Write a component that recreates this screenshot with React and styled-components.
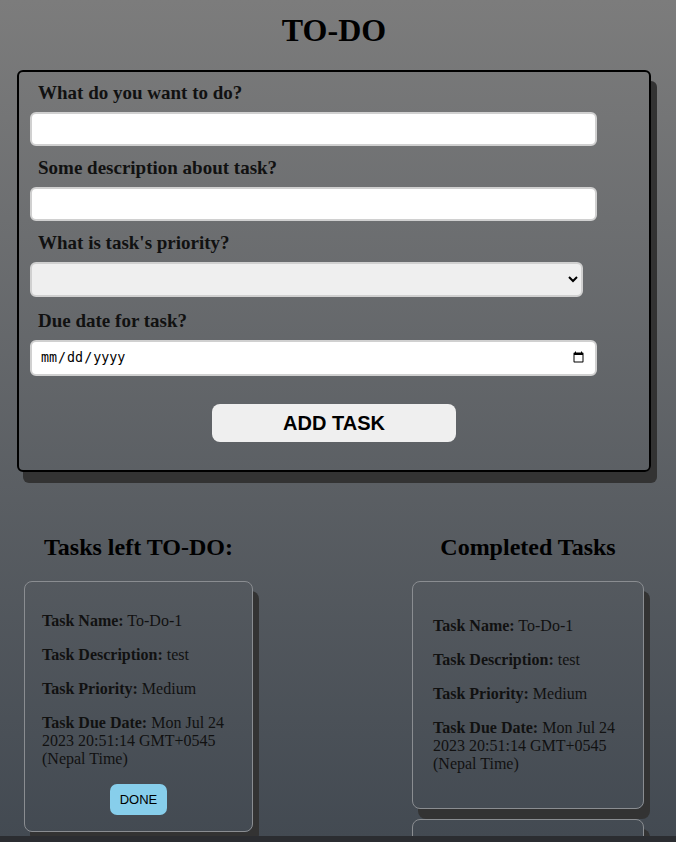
import styled, { createGlobalStyle } from "styled-components";

const GlobalStyle = createGlobalStyle`
  html, body {
    margin: 0;
    padding: 0;
  }
  body {
    font-family: "Liberation Serif", "Times New Roman", serif;
  }
`;

const tasks = [
  {
    name: "To-Do-1",
    description: "test",
    priority: "Medium",
    due: "Mon Jul 24 2023 20:51:14 GMT+0545 (Nepal Time)",
  },
];

const Page = styled.div`
  height: 100vh;
  display: flex;
  flex-direction: column;
`;

const Main = styled.main`
  flex: 1;
  overflow: hidden;
  background: linear-gradient(to bottom, #7c7c7c, #434a52);
  padding: 0 25px 0 17px;
`;

const Footer = styled.div`
  height: 6px;
  background: #2b2d31;
`;

const Title = styled.h1`
  margin: 12px 0 21px;
  text-align: center;
  font-size: 32px;
  color: #000;
`;

const FormBox = styled.form`
  border: 2px solid #000;
  border-radius: 6px;
  box-shadow: 6px 11px 0 #333;
  padding: 10px 11px 28px;
  display: flex;
  flex-direction: column;
  align-items: flex-start;
`;

const Label = styled.label`
  font-weight: bold;
  font-size: 19px;
  line-height: 22px;
  color: #111;
  margin: 0 0 8px 8px;
`;

const TextInput = styled.input`
  box-sizing: border-box;
  width: ${(p) => p.$w}px;
  height: ${(p) => p.$h}px;
  min-height: ${(p) => p.$h}px;
  margin-bottom: 11px;
  border: 2px solid #d0d0d0;
  border-radius: 6px;
  background: #fff;
  padding: 0 8px;
`;

const Select = styled.select`
  box-sizing: border-box;
  width: 553px;
  height: 35px;
  margin-bottom: 13px;
  border: 2px solid #d0d0d0;
  border-radius: 6px;
  background: #efefef;
`;

const AddButton = styled.button`
  align-self: center;
  margin-top: 17px;
  width: 244px;
  height: 38px;
  border: none;
  border-radius: 8px;
  background: #efefef;
  font-family: "Liberation Sans", Arial, sans-serif;
  font-weight: bold;
  font-size: 20px;
  color: #000;
`;

const Lists = styled.section`
  display: flex;
  justify-content: space-between;
  align-items: flex-start;
  padding: 62px 7px 0 7px;
`;

const Column = styled.div`
  width: ${(p) => p.$w}px;
  display: flex;
  flex-direction: column;
  gap: 10px;
`;

const ColumnTitle = styled.h2`
  margin: 0 0 10px;
  font-size: 24px;
  text-align: center;
  color: #000;
`;

const Card = styled.div`
  border: 1px solid #8a8d91;
  border-radius: 8px;
  box-shadow: 6px 10px 0 #333;
  padding: ${(p) => (p.$done ? "6px 20px 19px" : "1px 17px 16px")};
  min-height: ${(p) => (p.$stub ? "40px" : "0")};
  font-size: 16px;
  color: #111;

  p {
    margin: 16px 0;
    line-height: 18px;
  }
`;

const DoneButton = styled.button`
  display: block;
  margin: 0 auto;
  border: none;
  border-radius: 7px;
  background: #87ceeb;
  padding: 8px 10px;
  font-family: "Liberation Sans", Arial, sans-serif;
  font-size: 13px;
  color: #000;
`;

const CardBody = styled.div`
  padding-top: 13px;
`;

function TaskCard({ task, done }) {
  return (
    <Card $done={done}>
      <CardBody>
        <p>
          <b>Task Name:</b> {task.name}
        </p>
        <p>
          <b>Task Description:</b> {task.description}
        </p>
        <p>
          <b>Task Priority:</b> {task.priority}
        </p>
        <p>
          <b>Task Due Date:</b> {task.due}
        </p>
      </CardBody>
      {!done && <DoneButton type="button">DONE</DoneButton>}
    </Card>
  );
}

export default function App() {
  return (
    <Page>
      <GlobalStyle />
      <Main>
        <Title>TO-DO</Title>
        <FormBox onSubmit={(e) => e.preventDefault()}>
          <Label>What do you want to do?</Label>
          <TextInput type="text" $w={567} $h={34} />
          <Label>Some description about task?</Label>
          <TextInput type="text" $w={567} $h={34} />
          <Label>What is task's priority?</Label>
          <Select defaultValue="">
            <option value=""></option>
            <option value="low">Low</option>
            <option value="medium">Medium</option>
            <option value="high">High</option>
          </Select>
          <Label>Due date for task?</Label>
          <TextInput type="date" $w={567} $h={36} />
          <AddButton type="submit">ADD TASK</AddButton>
        </FormBox>
        <Lists>
          <Column $w={229}>
            <ColumnTitle>Tasks left TO-DO:</ColumnTitle>
            {tasks.map((t, i) => (
              <TaskCard key={i} task={t} />
            ))}
          </Column>
          <Column $w={232}>
            <ColumnTitle>Completed Tasks</ColumnTitle>
            {tasks.map((t, i) => (
              <TaskCard key={i} task={t} done />
            ))}
            <Card $done $stub />
          </Column>
        </Lists>
      </Main>
      <Footer />
    </Page>
  );
}
